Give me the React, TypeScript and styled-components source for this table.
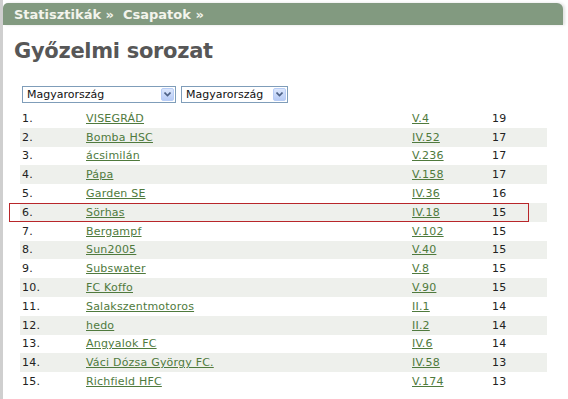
import React from 'react';
import styled, { createGlobalStyle } from 'styled-components';

const GlobalStyle = createGlobalStyle`
  html, body {
    margin: 0;
    padding: 0;
    background: #ffffff;
  }
`;

const Page = styled.div`
  width: 568px;
  height: 399px;
  box-sizing: border-box;
  border-left: 3px solid #cfcfcf;
  padding-top: 3px;
  padding-right: 5px;
  overflow: hidden;
  font-family: 'DejaVu Sans', Verdana, sans-serif;
`;

const Crumbs = styled.div`
  height: 22px;
  background: #829a80;
  border-radius: 5px 6px 0 0;
  box-shadow: 2px 0 3px rgba(0, 0, 0, 0.12);
  padding-left: 11px;
  display: flex;
  align-items: center;
  gap: 9px;
  font-size: 13px;
  font-weight: bold;
  color: #f3f4ec;
`;

const Title = styled.h1`
  margin: 11px 0 0 11px;
  font-size: 21px;
  line-height: 30px;
  font-weight: bold;
  letter-spacing: -0.3px;
  color: #575757;
`;

const Filters = styled.div`
  display: flex;
  gap: 5px;
  margin: 20px 0 0 19px;
`;

const Select = styled.div<{ $width: number }>`
  width: ${({ $width }) => $width}px;
  height: 17px;
  box-sizing: border-box;
  border: 1px solid #7f9db9;
  background: #fff;
  display: flex;
  align-items: center;
  justify-content: space-between;
  padding: 0 1px 0 4px;
  font-size: 11px;
  color: #111;
`;

const ArrowButton = styled.span`
  width: 13px;
  height: 13px;
  box-sizing: border-box;
  border: 1px solid #b8cdf6;
  border-radius: 2px;
  background: linear-gradient(#dbe6fc, #b7cbf5);
  display: flex;
  align-items: center;
  justify-content: center;
`;

const Table = styled.div`
  margin: 6px 0 0 17px;
  width: 527px;
`;

const Row = styled.div<{ $striped: boolean; $mine?: boolean }>`
  position: relative;
  display: grid;
  grid-template-columns: 64px 326px 80px 1fr;
  align-items: center;
  height: 18.8px;
  padding-left: 2px;
  background: ${({ $striped }) => ($striped ? '#eef0ec' : 'transparent')};
  font-size: 11px;
  letter-spacing: 0.2px;
  color: #222;

  &::after {
    content: '';
    display: ${({ $mine }) => ($mine ? 'block' : 'none')};
    position: absolute;
    left: -11px;
    right: 18px;
    top: 0;
    bottom: 0;
    border: 1px solid #b8262a;
  }
`;

const Cell = styled.span`
  white-space: nowrap;
`;

const TeamLink = styled.a`
  color: #4f7a3d;
  text-decoration: underline;
  white-space: nowrap;
`;

const rows = [
  ['VISEGRÁD', 'V.4', 19],
  ['Bomba HSC', 'IV.52', 17],
  ['ácsimilán', 'V.236', 17],
  ['Pápa', 'V.158', 17],
  ['Garden SE', 'IV.36', 16],
  ['Sörhas', 'IV.18', 15],
  ['Bergampf', 'V.102', 15],
  ['Sun2005', 'V.40', 15],
  ['Subswater', 'V.8', 15],
  ['FC Koffo', 'V.90', 15],
  ['Salakszentmotoros', 'II.1', 14],
  ['hedo', 'II.2', 14],
  ['Angyalok FC', 'IV.6', 14],
  ['Váci Dózsa György FC.', 'IV.58', 13],
  ['Richfield HFC', 'V.174', 13],
] as const;

const Arrow = () => (
  <ArrowButton>
    <svg width="7" height="5" viewBox="0 0 7 5">
      <path d="M0.5 0.5 L3.5 3.5 L6.5 0.5" fill="none" stroke="#4d6185" strokeWidth="1.6" />
    </svg>
  </ArrowButton>
);

const App: React.FC = () => (
  <Page>
    <GlobalStyle />
    <Crumbs>
      <span>Statisztikák »</span>
      <span>Csapatok »</span>
    </Crumbs>
    <Title>Győzelmi sorozat</Title>
    <Filters>
      <Select $width={154}>
        <span>Magyarország</span>
        <Arrow />
      </Select>
      <Select $width={107}>
        <span>Magyarország</span>
        <Arrow />
      </Select>
    </Filters>
    <Table>
      {rows.map(([team, league, streak], i) => (
        <Row key={team} $striped={i % 2 === 1} $mine={team === 'Sörhas'}>
          <Cell>{i + 1}.</Cell>
          <Cell>
            <TeamLink href="#">{team}</TeamLink>
          </Cell>
          <Cell>
            <TeamLink href="#">{league}</TeamLink>
          </Cell>
          <Cell>{streak}</Cell>
        </Row>
      ))}
    </Table>
  </Page>
);

export default App;
